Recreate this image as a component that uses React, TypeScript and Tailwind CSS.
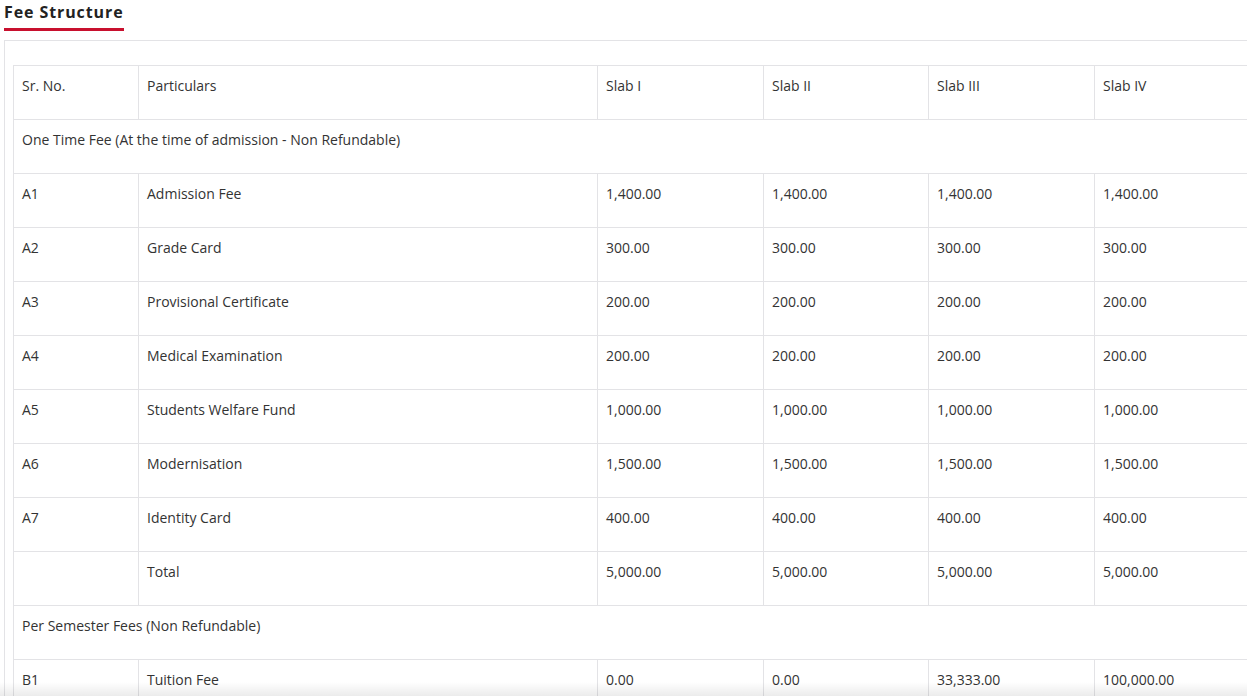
import React from "react";

const rows: [string, string, string[]][] = [
  ["A1", "Admission Fee", ["1,400.00", "1,400.00", "1,400.00", "1,400.00"]],
  ["A2", "Grade Card", ["300.00", "300.00", "300.00", "300.00"]],
  ["A3", "Provisional Certificate", ["200.00", "200.00", "200.00", "200.00"]],
  ["A4", "Medical Examination", ["200.00", "200.00", "200.00", "200.00"]],
  ["A5", "Students Welfare Fund", ["1,000.00", "1,000.00", "1,000.00", "1,000.00"]],
  ["A6", "Modernisation", ["1,500.00", "1,500.00", "1,500.00", "1,500.00"]],
  ["A7", "Identity Card", ["400.00", "400.00", "400.00", "400.00"]],
  ["", "Total", ["5,000.00", "5,000.00", "5,000.00", "5,000.00"]],
];

const td = "border border-[#e3e3e6] h-[54px] align-top pt-[9px] pl-[8px] pr-2";

export default function App() {
  return (
    <div className="relative h-[696px] overflow-hidden bg-white text-[#333] text-[14px]" style={{ fontFamily: '"Open Sans", sans-serif' }}>
      <div className="pl-[4px] pt-[1px]">
        <h2 className="inline-block text-[16px] leading-[22px] font-bold tracking-[0.9px] text-[#222] pb-[5px] border-b-[3px] border-[#c8102e] w-[120px] whitespace-nowrap">Fee Structure</h2>
      </div>
      <div className="ml-[4px] mt-[9px] border border-[#e3e3e6] pt-[24px] pl-[8px] w-[1260px]">
        <table className="border-collapse w-[1260px] table-fixed">
          <colgroup>
            <col className="w-[125px]" />
            <col className="w-[459px]" />
            <col className="w-[166px]" />
            <col className="w-[165px]" />
            <col className="w-[166px]" />
            <col />
          </colgroup>
          <tbody>
            <tr>
              <td className={td}>Sr. No.</td>
              <td className={td}>Particulars</td>
              <td className={td}>Slab I</td>
              <td className={td}>Slab II</td>
              <td className={td}>Slab III</td>
              <td className={td}>Slab IV</td>
            </tr>
            <tr><td colSpan={6} className={td}>One Time Fee (At the time of admission - Non Refundable)</td></tr>
            {rows.map(([a, b, v], i) => (
              <tr key={i}>
                <td className={td}>{a}</td>
                <td className={td}>{b}</td>
                {v.map((x, j) => <td key={j} className={td}>{x}</td>)}
              </tr>
            ))}
            <tr><td colSpan={6} className={td}>Per Semester Fees (Non Refundable)</td></tr>
            <tr>
              <td className={td}>B1</td>
              <td className={td}>Tuition Fee</td>
              <td className={td}>0.00</td>
              <td className={td}>0.00</td>
              <td className={td}>33,333.00</td>
              <td className={td}>100,000.00</td>
            </tr>
          </tbody>
        </table>
      </div>
      <div className="absolute left-0 right-0 bottom-0 h-[14px] bg-gradient-to-t from-[rgba(0,0,0,0.08)] to-transparent" />
    </div>
  );
}
